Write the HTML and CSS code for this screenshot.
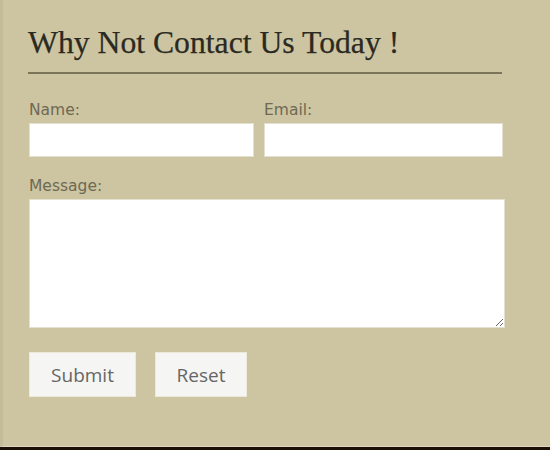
FILE: index.html
```html
<!DOCTYPE html>
<html>
<head>
<meta charset="utf-8">
<link rel="stylesheet" href="styles.css">
</head>
<body>
<div class="panel">
  <h1 class="title">Why Not Contact Us Today !</h1>
  <div class="rule"></div>
  <form class="form">
    <div class="row">
      <div class="field">
        <label class="label">Name:</label>
        <input class="input" type="text">
      </div>
      <div class="field">
        <label class="label">Email:</label>
        <input class="input" type="text">
      </div>
    </div>
    <div class="field message">
      <label class="label">Message:</label>
      <textarea class="textarea"></textarea>
    </div>
    <div class="buttons">
      <button type="button" class="btn btn-submit">Submit</button>
      <button type="button" class="btn btn-reset">Reset</button>
    </div>
  </form>
</div>
</body>
</html>
```
FILE: styles.css
```css
html, body {
  margin: 0;
  padding: 0;
}
body {
  background: #1b0f08;
  width: 550px;
  height: 450px;
  overflow: hidden;
}
.panel {
  background: #cdc5a1;
  border-left: 3px solid #c4bc98;
  border-bottom: 1px solid #ddd7bd;
  padding: 25px 0 49px 26px;
}
.title {
  margin: 0 0 11px -1px;
  font-family: "Liberation Serif", "Times New Roman", serif;
  font-weight: normal;
  font-size: 31.7px;
  line-height: 36px;
  color: #2b2a22;
  -webkit-text-stroke: 0.25px #2b2a22;
}
.rule {
  width: 474px;
  height: 2px;
  margin-left: -1px;
  background: #7a7458;
}
.form {
  margin: 27px 0 0;
}
.row {
  display: grid;
  grid-template-columns: 225px 239px;
  column-gap: 10px;
}
.field {
  display: flex;
  flex-direction: column;
}
.label {
  font-family: "DejaVu Sans", Verdana, sans-serif;
  font-size: 15.5px;
  line-height: 18px;
  color: #6e6953;
  margin-bottom: 4px;
}
.input {
  box-sizing: border-box;
  height: 34px;
  border: 1px solid #e4e0cf;
  background: #fff;
  margin: 0;
  outline: none;
}
.message {
  margin-top: 20px;
}
.textarea {
  box-sizing: border-box;
  width: 476px;
  height: 129px;
  border: 1px solid #e4e0cf;
  background: #fff;
  margin: 0;
  outline: none;
}
.buttons {
  display: flex;
  gap: 19px;
  margin-top: 24px;
}
.btn {
  box-sizing: border-box;
  height: 45px;
  background: #f5f5f4;
  border: 1px solid #ece8da;
  font-family: "Open Sans", sans-serif;
  font-size: 19px;
  color: #666;
  padding: 0;
  margin: 0;
}
.btn-submit {
  width: 107px;
}
.btn-reset {
  width: 92px;
}
```
